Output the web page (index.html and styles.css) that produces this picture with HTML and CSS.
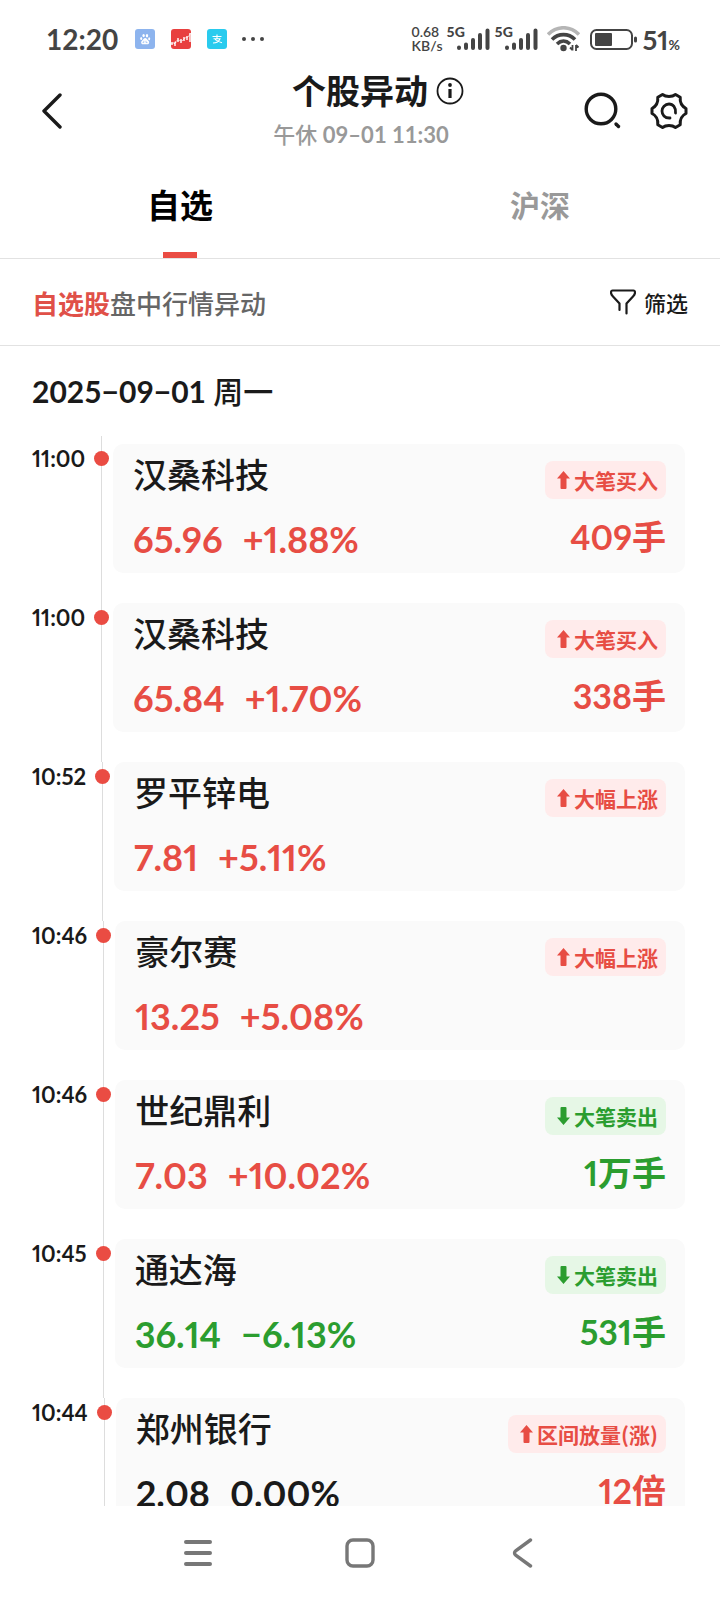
FILE: index.html
```
<!DOCTYPE html>
<html lang="zh-CN">
<head>
    <meta charset="UTF-8">
    <meta name="viewport" content="width=device-width, initial-scale=1.0">
    <title>个股异动</title>
    <link rel="stylesheet" href="styles.css">
</head>
<body>
    <div class="status-bar">
        <span class="clock">12:20</span>
        <div class="status-apps">
            <svg class="app-icon" viewBox="0 0 20 20">
                <rect width="20" height="20" rx="3" fill="#8db4ee"/>
                <g fill="#fff">
                    <ellipse cx="8.6" cy="6.6" rx="1.2" ry="1.7"/>
                    <ellipse cx="12" cy="6.8" rx="1.2" ry="1.7"/>
                    <ellipse cx="6.2" cy="9.4" rx="1" ry="1.5"/>
                    <ellipse cx="14.2" cy="9.8" rx="1" ry="1.5"/>
                    <path d="M10.2 9c1.400 0 2 1.700 3.200 2.700 1.400 1.300.8 3.500-1 3.500-1 0-3.200 0-4.400 0-1.900 0-2.500-2.200-1-3.500 1.200-1 1.800-2.700 3.200-2.700z"/>
                </g>
                <path d="M8.800 11.800v1.800h-1.200M11 11.800v1.800h1.500" fill="none" stroke="#8db4ee" stroke-width=".7"/>
            </svg>
            <svg class="app-icon" viewBox="0 0 20 20">
                <rect width="20" height="20" rx="3" fill="#e8403f"/>
                <path d="M1 13v3M3 15l2-2M4 14v3M7 9v4M10 10v4M13 8v4M16 7v4M19 4v9" stroke="#fff" stroke-width="1.400"/>
                <path d="M0 15l4-2 3-2 4 1 3-3 3-1 3-4" fill="none" stroke="#fff" stroke-width=".6"/>
            </svg>
            <svg class="app-icon" viewBox="0 0 20 20">
                <rect width="20" height="20" rx="3" fill="#29cbee"/>
                <path d="M5.500 7.500h9M10 5.500v4M6.500 9.700h6.500c-.8 2-3.500 4.300-7 4.300M8 10.500c2 1 4 2.500 7 3.200" fill="none" stroke="#fff" stroke-width="1.100"/>
            </svg>
        </div>
        <svg class="more-dots" viewBox="0 0 22 4" fill="#444">
            <circle cx="2" cy="2" r="2"/><circle cx="11" cy="2" r="2"/><circle cx="20" cy="2" r="2"/>
        </svg>
        <div class="net-speed">0.68<br>KB/s</div>
        <div class="signal">
            <span class="signal-type">5G</span>
            <svg class="signal-bars" viewBox="0 0 33 22" stroke="#444" stroke-width="4" stroke-linecap="round">
                <path d="M2 19.500v.5M9 16.500v3.500M16 12v8M23 7v13M30.500 2.500v17.500"/>
            </svg>
        </div>
        <div class="signal">
            <span class="signal-type">5G</span>
            <svg class="signal-bars" viewBox="0 0 33 22" stroke="#444" stroke-width="4" stroke-linecap="round">
                <path d="M2 19.500v.5M9 16.500v3.500M16 12v8M23 7v13M30.500 2.500v17.500"/>
            </svg>
        </div>
        <svg class="wifi" viewBox="0 0 33 26" fill="none" stroke="#444" stroke-width="3.600">
            <path d="M1 8.500C10-.5 23-.5 32 8.500" stroke="#b5b5b5"/>
            <path d="M5 13.500c6.500-6.500 16.500-6.500 23 0M10 18c4-3.800 9-3.800 13 0"/>
            <circle cx="16.500" cy="22" r="3.200" fill="#444" stroke="none"/>
            <path d="M25.500 19v5.500M23 21.500l2.500 2.500M29 25v-6M29 19l2.500 2.500" stroke-width="1.800"/>
        </svg>
        <svg class="battery" viewBox="0 0 47 21">
            <rect x="1" y="1" width="41" height="19" rx="5.500" fill="none" stroke="#444" stroke-width="2"/>
            <rect x="5" y="4" width="17" height="13" rx="1" fill="#444"/>
            <rect x="44" y="7.500" width="3" height="6" rx="1.500" fill="#444"/>
        </svg>
        <span class="battery-level">51<small>%</small></span>
    </div>

    <header class="header">
        <button class="icon-btn" aria-label="返回">
            <svg width="22" height="36" viewBox="0 0 22 36" fill="none" stroke="#1a1a1a" stroke-width="3.400" stroke-linecap="round" stroke-linejoin="round">
                <path d="M18 2L2 18l16 16"/>
            </svg>
        </button>
        <div class="header-title">
            <h1>个股异动
                <svg width="28" height="28" viewBox="0 0 28 28">
                    <circle cx="14" cy="14" r="12.500" fill="none" stroke="#1a1a1a" stroke-width="1.800"/>
                    <circle cx="14" cy="8" r="1.900" fill="#1a1a1a"/>
                    <path d="M14 12v9" stroke="#1a1a1a" stroke-width="3.200"/>
                </svg>
            </h1>
            <p>午休 <b>09–01 11:30</b></p>
        </div>
        <div class="header-actions">
            <button class="icon-btn" aria-label="搜索">
                <svg width="38" height="38" viewBox="0 0 38 38" fill="none" stroke="#1a1a1a" stroke-width="3.400" stroke-linecap="round">
                    <circle cx="17" cy="17" r="14.800"/>
                    <path d="M32 32l2.500 2.500"/>
                </svg>
            </button>
            <button class="icon-btn" aria-label="设置">
                <svg width="38" height="38" viewBox="0 0 38 38" fill="none" stroke="#1a1a1a" stroke-width="3" stroke-linejoin="round" stroke-linecap="round">
                    <path d="M12.500 2.500C16 5.200 22 5.200 25.500 2.500L30.200 5.200C29.800 10.500 31.500 14.300 36 16.500V21.500C31.500 23.700 29.800 27.500 30.200 32.800L25.500 35.500C22 32.800 16 32.800 12.500 35.500L7.800 32.800C8.200 27.500 6.500 23.700 2 21.500V16.500C6.500 14.300 8.200 10.500 7.800 5.200Z"/>
                    <path d="M20 26C14.500 26.300 12 22.500 12 19S15 12 19 12S26 15.500 25.500 21" stroke-width="2.800"/>
                </svg>
            </button>
        </div>
    </header>

    <nav class="tabs">
        <button class="tab active">自选</button>
        <button class="tab">沪深</button>
    </nav>

    <div class="filter-bar">
        <p><em>自选股</em>盘中行情异动</p>
        <button class="filter-btn">
            <svg width="26" height="26" viewBox="0 0 26 26" fill="none" stroke="#1a1a1a" stroke-width="2.200" stroke-linecap="round" stroke-linejoin="round">
                <path d="M9.500 21v-6.500L3 7.500C1.500 6 1 5 1 3.500 1 2 1.500 1.500 2.500 1.500h21c1 0 1.500.5 1.500 2S24.500 6 23 7.500L16.500 14.500V24.500"/>
            </svg>
            筛选
        </button>
    </div>

    <main class="feed">
        <h2>2025−09−01 <span>周一</span></h2>
        <ul class="timeline">
            <li class="event">
                <time>11:00</time>
                <span class="rail"></span>
                <article class="card">
                    <div class="stock">
                        <h3>汉桑科技</h3>
                        <p class="up"><span>65.96</span><span>+1.88%</span></p>
                    </div>
                    <div class="signal-info up">
                        <span class="tag"><svg class="arrow" viewBox="0 0 13 18"><path d="M6.500 0L13 7.500H9.500V17a1 1 0 0 1-1 1h-4a1 1 0 0 1-1-1V7.500H0z"/></svg>大笔买入</span>
                        <strong>409手</strong>
                    </div>
                </article>
            </li>
            <li class="event">
                <time>11:00</time>
                <span class="rail"></span>
                <article class="card">
                    <div class="stock">
                        <h3>汉桑科技</h3>
                        <p class="up"><span>65.84</span><span>+1.70%</span></p>
                    </div>
                    <div class="signal-info up">
                        <span class="tag"><svg class="arrow" viewBox="0 0 13 18"><path d="M6.500 0L13 7.500H9.500V17a1 1 0 0 1-1 1h-4a1 1 0 0 1-1-1V7.500H0z"/></svg>大笔买入</span>
                        <strong>338手</strong>
                    </div>
                </article>
            </li>
            <li class="event">
                <time>10:52</time>
                <span class="rail"></span>
                <article class="card">
                    <div class="stock">
                        <h3>罗平锌电</h3>
                        <p class="up"><span>7.81</span><span>+5.11%</span></p>
                    </div>
                    <div class="signal-info up">
                        <span class="tag"><svg class="arrow" viewBox="0 0 13 18"><path d="M6.500 0L13 7.500H9.500V17a1 1 0 0 1-1 1h-4a1 1 0 0 1-1-1V7.500H0z"/></svg>大幅上涨</span>
                    </div>
                </article>
            </li>
            <li class="event">
                <time>10:46</time>
                <span class="rail"></span>
                <article class="card">
                    <div class="stock">
                        <h3>豪尔赛</h3>
                        <p class="up"><span>13.25</span><span>+5.08%</span></p>
                    </div>
                    <div class="signal-info up">
                        <span class="tag"><svg class="arrow" viewBox="0 0 13 18"><path d="M6.500 0L13 7.500H9.500V17a1 1 0 0 1-1 1h-4a1 1 0 0 1-1-1V7.500H0z"/></svg>大幅上涨</span>
                    </div>
                </article>
            </li>
            <li class="event">
                <time>10:46</time>
                <span class="rail"></span>
                <article class="card">
                    <div class="stock">
                        <h3>世纪鼎利</h3>
                        <p class="up"><span>7.03</span><span>+10.02%</span></p>
                    </div>
                    <div class="signal-info down">
                        <span class="tag"><svg class="arrow" viewBox="0 0 13 18"><path d="M6.500 18L13 10.500H9.500V1a1 1 0 0 0-1-1h-4a1 1 0 0 0-1 1v9.500H0z"/></svg>大笔卖出</span>
                        <strong>1万手</strong>
                    </div>
                </article>
            </li>
            <li class="event">
                <time>10:45</time>
                <span class="rail"></span>
                <article class="card">
                    <div class="stock">
                        <h3>通达海</h3>
                        <p class="down"><span>36.14</span><span>−6.13%</span></p>
                    </div>
                    <div class="signal-info down">
                        <span class="tag"><svg class="arrow" viewBox="0 0 13 18"><path d="M6.500 18L13 10.500H9.500V1a1 1 0 0 0-1-1h-4a1 1 0 0 0-1 1v9.500H0z"/></svg>大笔卖出</span>
                        <strong>531手</strong>
                    </div>
                </article>
            </li>
            <li class="event">
                <time>10:44</time>
                <span class="rail"></span>
                <article class="card">
                    <div class="stock">
                        <h3>郑州银行</h3>
                        <p><span>2.08</span><span>0.00%</span></p>
                    </div>
                    <div class="signal-info up">
                        <span class="tag"><svg class="arrow" viewBox="0 0 13 18"><path d="M6.500 0L13 7.500H9.500V17a1 1 0 0 1-1 1h-4a1 1 0 0 1-1-1V7.500H0z"/></svg>区间放量(涨)</span>
                        <strong>12倍</strong>
                    </div>
                </article>
            </li>
        </ul>
    </main>

    <footer class="system-nav">
        <button class="icon-btn" aria-label="最近任务">
            <svg width="30" height="30" viewBox="0 0 30 30" stroke="#777" stroke-width="4" stroke-linecap="round">
                <path d="M3 4h24M3 15h24M3 26h24"/>
            </svg>
        </button>
        <button class="icon-btn" aria-label="主屏幕">
            <svg width="30" height="30" viewBox="0 0 30 30" fill="none" stroke="#777" stroke-width="3.400">
                <rect x="2" y="2" width="26" height="26" rx="6"/>
            </svg>
        </button>
        <button class="icon-btn" aria-label="返回">
            <svg width="30" height="30" viewBox="0 0 30 30" fill="none" stroke="#777" stroke-width="3.400" stroke-linecap="round">
                <path d="M23.500 2L9 12.500Q6 15 9 17.500L23.500 28"/>
            </svg>
        </button>
    </footer>
</body>
</html>
```

FILE: styles.css
```
* {
    box-sizing: border-box;
    margin: 0;
    padding: 0;
}

body {
    display: flex;
    flex-direction: column;
    height: 100vh;
    font-family: Lato, "Noto Sans CJK SC", sans-serif;
    font-kerning: none;
    color: #1a1a1a;
    background: #fff;
}

button {
    font: inherit;
    color: inherit;
    background: none;
    border: none;
    cursor: pointer;
}

svg {
    display: block;
    flex: none;
}

/* status bar */
.status-bar {
    display: flex;
    align-items: center;
    height: 60px;
    padding: 18px 40px 0 46px;
    color: #444;
}

.clock {
    width: 89px;
    font-size: 28px;
    font-weight: bold;
}

.status-apps {
    display: flex;
    gap: 16px;
}

.app-icon {
    width: 20px;
    height: 20px;
}

.more-dots {
    width: 22px;
    height: 4px;
    margin-left: 15px;
}

.net-speed {
    margin-left: auto;
    width: 35px;
    font-size: 14px;
    font-weight: 600;
    line-height: 14px;
}

.signal {
    position: relative;
    display: flex;
    justify-content: flex-end;
    width: 43px;
    margin-right: 5px;
}

.signal-type {
    position: absolute;
    left: 0;
    top: -3px;
    font-size: 14px;
    font-weight: 900;
    line-height: 14px;
}

.signal-bars {
    width: 33px;
    height: 22px;
}

.wifi {
    width: 33px;
    height: 26px;
    margin: 0 10px 0 4px;
}

.battery {
    width: 47px;
    height: 21px;
    margin-right: 6px;
}

.battery-level {
    font-size: 27px;
    font-weight: bold;
    font-variant-numeric: proportional-nums;
}

.battery-level small {
    font-size: 14px;
}

/* title */
.header {
    display: grid;
    grid-template-columns: 1fr auto 1fr;
    align-items: center;
    height: 98px;
    padding: 4px 32px 0 42px;
}

.icon-btn {
    display: flex;
}

.header-title {
    text-align: center;
}

.header-title h1 {
    display: flex;
    align-items: center;
    gap: 8px;
    padding-left: 26px;
    font-size: 34px;
    line-height: 48px;
}

.header-title p {
    padding-right: 8px;
    font-size: 22px;
    font-weight: 500;
    line-height: 40px;
    color: #999;
}

.header-actions {
    display: flex;
    justify-content: flex-end;
    gap: 28px;
}

/* tabs */
.tabs {
    display: flex;
    height: 101px;
    border-bottom: 1px solid #e2e2e2;
}

.tab {
    position: relative;
    flex: 1;
    padding-bottom: 8px;
    font-size: 30px;
    font-weight: bold;
    color: #999;
}

.tab.active {
    font-size: 33px;
    color: #000;
}

.tab.active::after {
    content: "";
    position: absolute;
    left: 50%;
    bottom: 0;
    width: 34px;
    height: 6px;
    margin-left: -17px;
    background: #ea4c43;
}

.filter-bar {
    display: flex;
    justify-content: space-between;
    align-items: center;
    height: 87px;
    padding: 0 32px;
    border-bottom: 1px solid #e2e2e2;
    font-size: 26px;
    font-weight: 500;
    color: #666;
}

.filter-bar em {
    font-style: normal;
    font-weight: bold;
    color: #e05048;
}

.filter-btn {
    display: flex;
    align-items: center;
    gap: 8px;
    font-size: 22px;
    color: #1a1a1a;
}

/* timeline */
.feed {
    flex: 1;
    min-height: 0;
    overflow: hidden;
}

.feed h2 {
    padding: 0 32px;
    font-size: 30px;
    font-weight: bold;
    line-height: 90px;
}

.feed h2 span {
    font-weight: 500;
}

.timeline {
    list-style: none;
    font-variant-numeric: proportional-nums;
}

.event {
    display: flex;
    padding: 0 35px 0 32px;
}

.event:first-child time,
.event:first-child .card {
    margin-top: 8px;
}

.event:first-child .rail {
    padding-top: 15px;
}

.event time {
    margin-right: 9px;
    font-size: 22px;
    font-weight: bold;
    line-height: 30px;
}

.rail {
    flex: none;
    width: 15px;
    padding-top: 7px;
    background: linear-gradient(#ddd, #ddd) 7px 0 / 1px 100% no-repeat;
}

.rail::before {
    content: "";
    display: block;
    height: 15px;
    border-radius: 50%;
    background: #ea4c43;
}

.card {
    flex: 1;
    display: flex;
    justify-content: space-between;
    margin: 0 0 30px 4px;
    padding: 10px 19px 13px 20px;
    border-radius: 10px;
    background: #fafafa;
}

.stock h3 {
    font-size: 34px;
    font-weight: 500;
    line-height: 42px;
}

.stock p {
    display: flex;
    gap: 20px;
    margin-top: 22px;
    font-size: 36px;
    font-weight: bold;
    line-height: 42px;
}

.signal-info {
    display: flex;
    flex-direction: column;
    align-items: flex-end;
    gap: 17px;
    padding-top: 7px;
}

.signal-info strong {
    font-size: 34px;
    line-height: 42px;
}

.tag {
    display: flex;
    align-items: center;
    gap: 4px;
    height: 38px;
    padding: 0 8px 0 12px;
    border-radius: 8px;
    font-family: "Noto Sans CJK SC", sans-serif;
    font-size: 21px;
    font-weight: bold;
    background: #ffebeb;
}

.arrow {
    width: 13px;
    height: 18px;
    fill: currentColor;
}

.up {
    color: #e74d44;
}

.down {
    color: #2b9d2f;
}

.down .tag {
    background: #e6f7e6;
}

/* system buttons */
.system-nav {
    display: flex;
    flex: none;
    justify-content: center;
    gap: 132px;
    height: 94px;
    padding-top: 32px;
}
```
